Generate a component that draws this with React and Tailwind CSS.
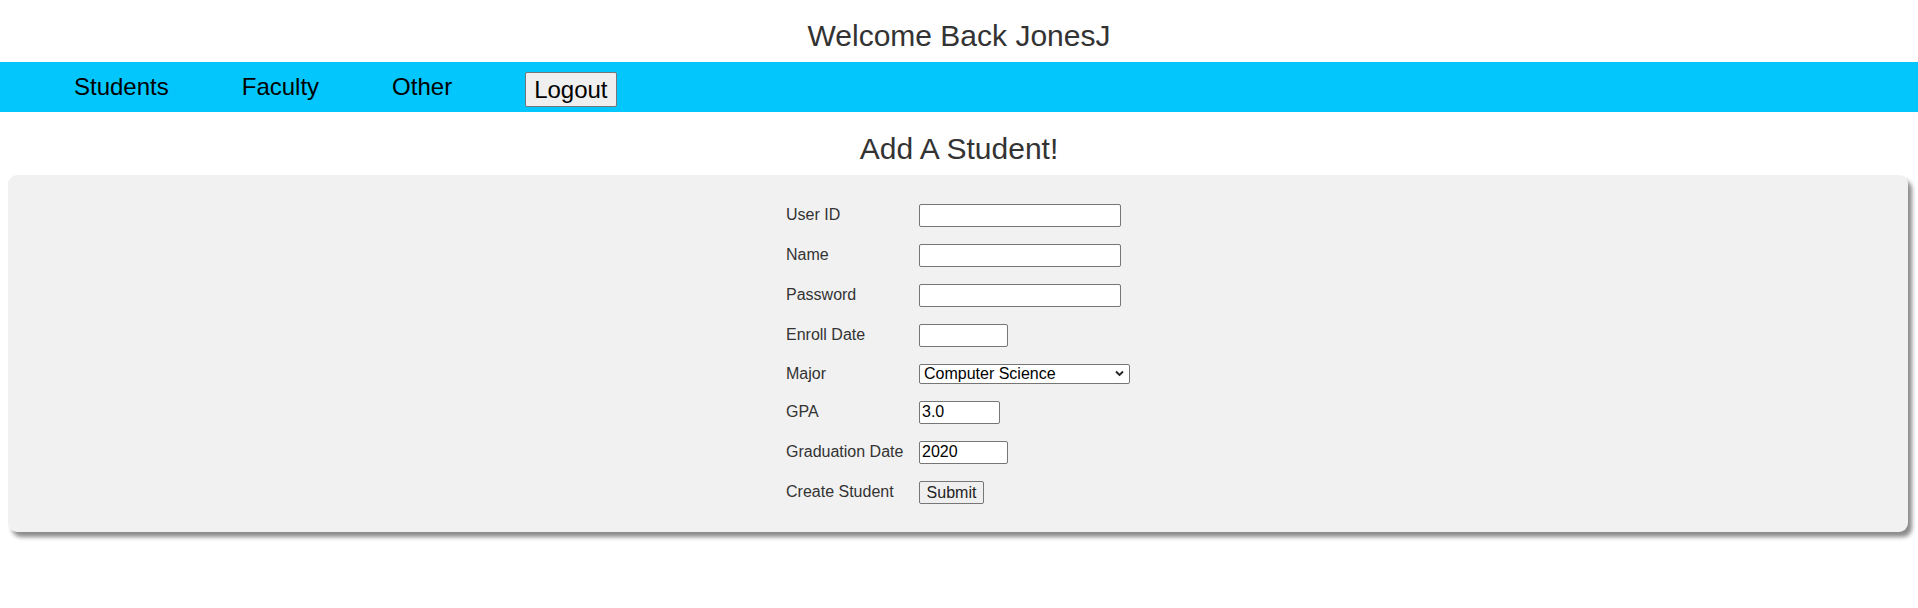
import { useState } from "react";

const labelCls = "text-[16px] leading-[18px] text-[#333]";
const inputCls =
  "h-[23px] border border-[#767676] rounded-[2px] bg-white px-[2px] text-[16px] text-black leading-[19px] outline-none";

const App = () => {
  const [userId, setUserId] = useState("");
  const [name, setName] = useState("");
  const [password, setPassword] = useState("");
  const [enroll, setEnroll] = useState("");
  const [major, setMajor] = useState("Computer Science");
  const [gpa, setGpa] = useState("3.0");
  const [grad, setGrad] = useState("2020");

  return (
    <div className="min-h-[608px] bg-white font-['Liberation_Sans',Arial,sans-serif]">
      <div className="h-[62px] pt-[18px] text-center text-[30px] leading-[35px] text-[#333]">
        Welcome Back JonesJ
      </div>

      <nav className="h-[50px] bg-[#03c6fc] flex items-center pl-[74px] gap-[73px] text-[24px] text-black">
        <a className="cursor-pointer leading-[28px]">Students</a>
        <a className="cursor-pointer leading-[28px]">Faculty</a>
        <a className="cursor-pointer leading-[28px]">Other</a>
        <button className="mt-[5px] h-[35px] px-[8px] border border-[#767676] rounded-[2px] bg-[#efefef] text-[24px] leading-[28px] text-black">
          Logout
        </button>
      </nav>

      <h2 className="pt-[19px] text-center text-[30px] leading-[35px] text-[#333]">
        Add A Student!
      </h2>

      <div className="mt-[9px] mx-[8px] mr-[10px] rounded-[9px] bg-[#f1f1f1] shadow-[4px_5px_4px_#8c8c8c] py-[28.5px]">
        <form
          onSubmit={(e) => e.preventDefault()}
          className="mx-auto w-fit grid grid-cols-[133px_auto] gap-y-[17px] items-center justify-items-start"
        >
          <label className={labelCls}>User ID</label>
          <input
            type="text"
            value={userId}
            onChange={(e) => setUserId(e.target.value)}
            className={`${inputCls} w-[202px]`}
          />

          <label className={labelCls}>Name</label>
          <input
            type="text"
            value={name}
            onChange={(e) => setName(e.target.value)}
            className={`${inputCls} w-[202px]`}
          />

          <label className={labelCls}>Password</label>
          <input
            type="password"
            value={password}
            onChange={(e) => setPassword(e.target.value)}
            className={`${inputCls} w-[202px]`}
          />

          <label className={labelCls}>Enroll Date</label>
          <input
            type="text"
            value={enroll}
            onChange={(e) => setEnroll(e.target.value)}
            className={`${inputCls} w-[89px]`}
          />

          <label className={labelCls}>Major</label>
          <div className="relative w-[211px] h-[20px]">
            <select
              value={major}
              onChange={(e) => setMajor(e.target.value)}
              className="block appearance-none w-full h-[20px] border border-[#767676] rounded-[2px] bg-white pl-[4px] pr-[20px] text-[16px] leading-[18px] text-black outline-none"
            >
              <option>Computer Science</option>
              <option>Mathematics</option>
              <option>Engineering</option>
            </select>
            <svg
              className="absolute right-[6px] top-[6px] pointer-events-none"
              width="9"
              height="7"
              viewBox="0 0 9 7"
            >
              <path d="M1 1.5 L4.5 5 L8 1.5" fill="none" stroke="#222" strokeWidth="1.8" />
            </svg>
          </div>

          <label className={labelCls}>GPA</label>
          <input
            type="text"
            value={gpa}
            onChange={(e) => setGpa(e.target.value)}
            className={`${inputCls} w-[81px]`}
          />

          <label className={labelCls}>Graduation Date</label>
          <input
            type="text"
            value={grad}
            onChange={(e) => setGrad(e.target.value)}
            className={`${inputCls} w-[89px]`}
          />

          <label className={labelCls}>Create Student</label>
          <button
            type="submit"
            className="h-[23px] w-[65px] border border-[#767676] rounded-[2px] bg-[#efefef] text-[16px] leading-[19px] text-[#222]"
          >
            Submit
          </button>
        </form>
      </div>
    </div>
  );
};

export default App;
